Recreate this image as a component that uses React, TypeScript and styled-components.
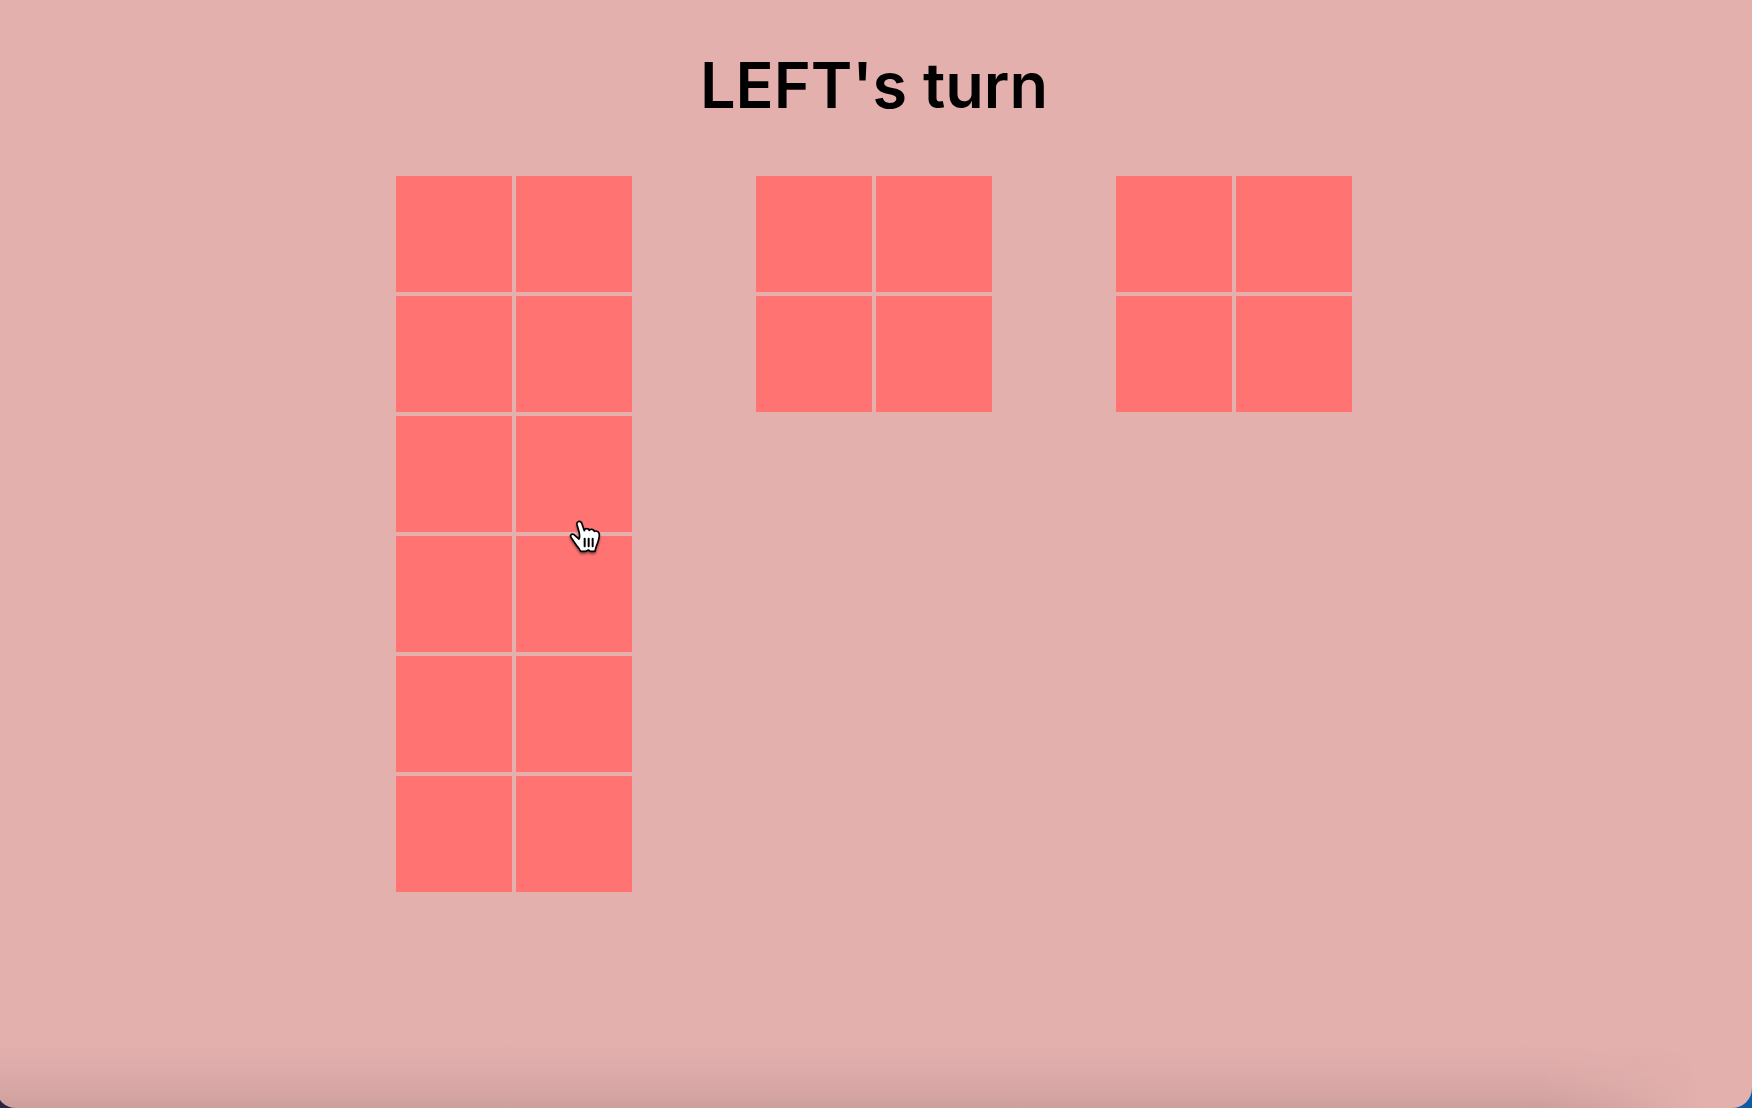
import React from "react";
import styled, { createGlobalStyle } from "styled-components";

const GlobalStyle = createGlobalStyle`
  *, *::before, *::after { box-sizing: border-box; }
  body {
    margin: 0;
    overflow: hidden;
    background: linear-gradient(90deg, #2a2542 50%, #0d5ba5 50%);
    font-family: Inter, "Liberation Sans", Arial, sans-serif;
  }
`;

const Window = styled.main`
  position: relative;
  display: flex;
  flex-direction: column;
  align-items: center;
  min-height: 100vh;
  margin-left: -4px;
  padding-top: 47px;
  overflow: hidden;
  background: #e3b0ae;
  border-radius: 0 0 20px 20px;
`;

const DockShadow = styled.div`
  position: absolute;
  inset: auto 0 0 0;
  height: 64px;
  pointer-events: none;
  background: linear-gradient(
    to bottom,
    rgba(80, 50, 50, 0) 0%,
    rgba(80, 50, 50, 0.03) 36%,
    rgba(80, 60, 50, 0.08) 70%,
    rgba(80, 70, 60, 0.15) 100%
  );
  mask-image: linear-gradient(to right, #000 88%, rgba(0, 0, 0, 0.5) 93%, transparent 97%);
`;

const Title = styled.h1`
  margin: 0;
  color: #000;
  font-size: 63px;
  font-weight: 600;
  line-height: 76px;
`;

const Board = styled.div`
  display: flex;
  align-items: flex-start;
  gap: 124px;
  margin-top: 53px;
`;

const Block = styled.div`
  display: grid;
  grid-template-columns: repeat(2, 116px);
  grid-auto-rows: 116px;
  gap: 4px;
`;

const Tile = styled.button`
  padding: 0;
  border: 0;
  background: #ff7472;
  cursor: pointer;
`;

const Pointer = styled.svg`
  position: absolute;
  top: 511px;
  left: 564px;
  width: 50px;
  height: 50px;
  pointer-events: none;
  filter: drop-shadow(0 2px 1px rgba(0, 0, 0, 0.4));
`;

const blocks = [
  { name: "Block 1", rows: 6 },
  { name: "Block 2", rows: 2 },
  { name: "Block 3", rows: 2 },
];

export default function App() {
  return (
    <>
      <GlobalStyle />
      <Window>
        <Title>LEFT's turn</Title>
        <Board>
          {blocks.map(({ name, rows }) => (
            <Block key={name} role="group" aria-label={name}>
              {Array.from({ length: rows * 2 }, (_, i) => (
                <Tile key={i} type="button" aria-label={`${name}, square ${i + 1}`} />
              ))}
            </Block>
          ))}
        </Board>
        <DockShadow />
        <Pointer viewBox="0 0 150 150" aria-hidden="true">
          <path
            d="M51 41C49 31 60 27 65 36L73 59C74 51 85 51 88 58C91 53 101 54 103 61C110 58 118 63 118 71C118 84 113 96 109 106L105 121H91L85 117L78 121H62L57 113C48 103 42 92 33 79C29 72 36 67 42 71L57 84C60 80 59 71 57 62Z"
            fill="#fff"
            stroke="#000"
            strokeWidth="5"
            strokeLinejoin="round"
          />
          <path d="M74 83V106M86 83V106M98 83V106" stroke="#000" strokeWidth="6" strokeLinecap="round" />
        </Pointer>
      </Window>
    </>
  );
}
